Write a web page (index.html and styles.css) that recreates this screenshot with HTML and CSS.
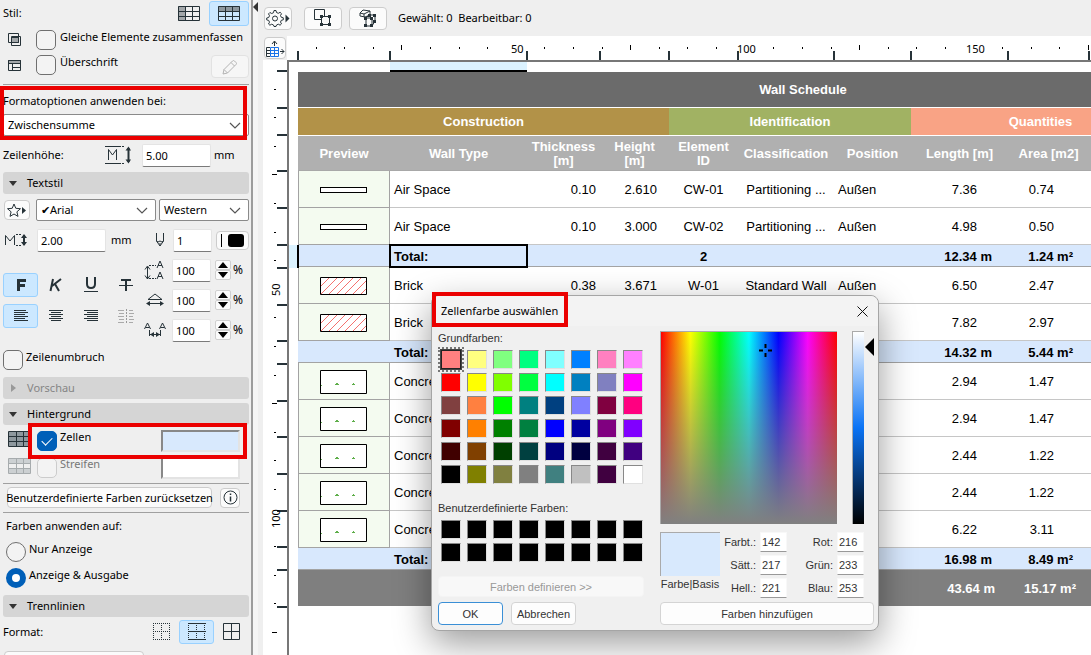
FILE: index.html
```
<!DOCTYPE html>
<html lang="de">
<head>
<meta charset="utf-8">
<title>Wall Schedule</title>
<link rel="stylesheet" href="styles.css">
</head>
<body>
<svg width="0" height="0" class="defs" aria-hidden="true">
  <symbol id="brick" viewBox="0 0 47 18"><path d="M.5 .5h46v17H.5z" fill="#fff"/><path d="M1 9L9 1M1 17L17 1M9 17L25 1M17 17L33 1M25 17L41 1M33 17L46 4M41 17L46 12" fill="none" stroke="#f4726e"/><path d="M.5 .5h46v17H.5z" fill="none" stroke="#000"/></symbol>
  <symbol id="conc" viewBox="0 0 47 24"><path d="M.5 .5h46v23H.5z" fill="#fff" stroke="#000"/><path d="M15 15v-1h1v-1h2v1h1v1zM32 15v-1h1v-1h1v1h1v1zM1 15h1v1H1z" fill="#5fae4a"/></symbol>
</svg>
<div class="app">
<aside class="panel">
  <div class="row row-style">
    <span class="grow">Stil:</span>
    <button class="tool" aria-label="Stil Spalten"><svg width="24" height="17" viewBox="0 0 24 17"><path d="M1 1h7v15H1z" fill="#a3a7aa"/><path d="M1.500 1.500h21v14h-21zM8.500 1v15M15.500 1v15M1 6.500h22M1 11.500h22" fill="none" stroke="#263238"/></svg></button>
    <button class="tool on" aria-label="Stil Zeilen"><svg width="24" height="17" viewBox="0 0 24 17"><path d="M1 1h22v5H1z" fill="#8d979e"/><path d="M1.500 1.500h21v14h-21zM8.500 1v15M15.500 1v15M1 6.500h22M1 11.500h22" fill="none" stroke="#263238"/></svg></button>
  </div>
  <div class="checks">
    <div class="row row-check">
      <svg class="lead" width="14" height="14" viewBox="0 0 14 14" fill="none" stroke="#263238"><path d="M3.500 4.500h7v5h-7z" fill="#a3a7aa"/><path d="M.5 .5h10v9H.5z"/><path d="M3.500 3.500h9v9h-9z"/></svg>
      <input type="checkbox" id="merge"><label for="merge">Gleiche Elemente zusammenfassen</label>
    </div>
    <div class="row row-check">
      <svg class="lead" width="14" height="14" viewBox="0 0 14 14" fill="none" stroke="#263238"><path d="M.5 2.500h12v3H.5z" fill="#a3a7aa"/><path d="M.5 2.500h12v10H.5zM4.500 5v7M4 9.500h8"/></svg>
      <input type="checkbox" id="head"><label for="head" class="grow">Überschrift</label>
      <button class="btn pencil" aria-label="Bearbeiten" disabled><svg width="16" height="16" viewBox="0 0 16 16" fill="none" stroke="#b3b3b3" stroke-linejoin="round"><path d="M1 15l1-4.500L10.500 2q1-1 2 0l1.500 1.500q1 1 0 2L5.500 14zM9 3.500L12.500 7M2 10.500L5.500 14"/></svg></button>
    </div>
  </div>
  <hr>
  <div class="apply">
    <label for="apply">Formatoptionen anwenden bei:</label>
    <span class="pick"><select id="apply"><option>Zwischensumme</option></select><svg width="12" height="7" viewBox="0 0 12 7"><path d="M1 1l5 5 5-5" fill="none" stroke="#555" stroke-width="1.200"/></svg></span>
    <span class="mark mark-apply"></span>
  </div>
  <div class="row row-height">
    <label for="rowh" class="grow">Zeilenhöhe:</label>
    <svg width="26" height="20" viewBox="0 0 26 20" fill="none" stroke="#263238"><path d="M3.500 15V4.500L7.500 10l4-5.500V15M0 1.500h14M0 18.500h14"/><path d="M14 1.500h6M14 18.500h6" stroke-dasharray="2 1"/><path d="M23.500 3v14" stroke-width="2"/><path d="M20.500 5.500l3-4 2.500 4zM20.500 14.500l3 4 2.500-4z" fill="#263238" stroke="none"/></svg>
    <input type="text" class="num wide" id="rowh" value="5.00"><span class="unit">mm</span>
  </div>
  <button class="section"><i class="tri down"></i>Textstil</button>
  <div class="row row-font">
    <button class="btn star" aria-label="Favoriten"><svg width="20" height="15" viewBox="0 0 20 15"><path d="M7 1l1.800 4.300 4.700.4-3.600 3.100 1.100 4.600L7 11l-4 2.400 1.100-4.600L.5 5.700l4.700-.4z" fill="none" stroke="#263238"/><path d="M15 4l4 3.500-4 3.500z" fill="#263238"/></svg></button>
    <span class="pick pick-font"><select aria-label="Schrift"><option>✔Arial</option></select><svg width="12" height="7" viewBox="0 0 12 7"><path d="M1 1l5 5 5-5" fill="none" stroke="#555" stroke-width="1.200"/></svg></span>
    <span class="pick pick-set"><select aria-label="Zeichensatz"><option>Western</option></select><svg width="12" height="7" viewBox="0 0 12 7"><path d="M1 1l5 5 5-5" fill="none" stroke="#555" stroke-width="1.200"/></svg></span>
  </div>
  <div class="row row-size">
    <svg class="size-icon" width="22" height="14" viewBox="0 0 22 14" fill="none" stroke="#263238"><path d="M.5 12V2.500L5 8l4.500-5.500V12"/><path d="M11 1.500h5M11 12.500h5" stroke-dasharray="2 1"/><path d="M19 2v10" stroke-width="2"/><path d="M16 5l3-4 3 4zM16 9l3 4 3-4z" fill="#263238" stroke="none"/></svg>
    <input type="text" class="num wide" aria-label="Schriftgröße" value="2.00"><span class="unit grow">mm</span>
    <svg class="pen-icon" width="10" height="14" viewBox="0 0 10 14" fill="none" stroke="#263238"><path d="M1.500 0v8L5 13l3.500-5V0M1.500 8l1.500 1 2-1 2 1 1.500-1M5 10v3"/></svg>
    <input type="text" class="num" aria-label="Stift" value="1">
    <button class="btn pencolor" aria-label="Stiftfarbe"><i class="hair"></i><i class="ink"></i></button>
  </div>
  <div class="format">
    <div class="styles">
      <button class="tool on" aria-label="Fett"><svg width="12" height="14" viewBox="0 0 12 14"><path d="M3.500 13V2.500H11M4 7.500h6" fill="none" stroke="#263238" stroke-width="3"/></svg></button>
      <button class="tool" aria-label="Kursiv"><svg width="13" height="14" viewBox="0 0 13 14"><path d="M4 1L1.500 13M12 1L3 8M6 6l4 7" fill="none" stroke="#263238" stroke-width="2"/></svg></button>
      <button class="tool" aria-label="Unterstrichen"><svg width="14" height="16" viewBox="0 0 14 16"><path d="M3 0v7q0 4 4 4t4-4V0" fill="none" stroke="#263238" stroke-width="2"/><path d="M0 14.500h14" stroke="#263238"/></svg></button>
      <button class="tool" aria-label="Durchgestrichen"><svg width="14" height="14" viewBox="0 0 14 14"><path d="M2 2h10M7 1v12" fill="none" stroke="#263238" stroke-width="2"/><path d="M0 7.500h14" stroke="#263238"/></svg></button>
      <button class="tool on" aria-label="Linksbündig"><svg width="14" height="12" viewBox="0 0 14 12"><path d="M0 .5h12M0 2.500h14M0 4.500h11M0 6.500h14M0 8.500h11M0 10.500h14" stroke="#263238"/></svg></button>
      <button class="tool" aria-label="Zentriert"><svg width="14" height="12" viewBox="0 0 14 12"><path d="M0 .5h14M2 2.500h10M0 4.500h14M2 6.500h10M0 8.500h14M2 10.500h10" stroke="#263238"/></svg></button>
      <button class="tool" aria-label="Rechtsbündig"><svg width="14" height="12" viewBox="0 0 14 12"><path d="M0 .5h14M3 2.500h11M0 4.500h14M3 6.500h11M0 8.500h14M3 10.500h11" stroke="#263238"/></svg></button>
      <button class="tool" aria-label="Blocksatz" disabled><svg width="16" height="14" viewBox="0 0 16 14"><path d="M0 1.500h6M1 4.500h5M0 7.500h6M1 10.500h5M0 13.500h6M11 1.500h4M11 4.500h5M11 7.500h4M11 10.500h5M11 13.500h4" stroke="#aaa"/><path d="M8.500 0v14" stroke="#999" stroke-dasharray="2 1"/></svg></button>
    </div>
    <div class="spins">
      <div class="row spin">
        <svg width="22" height="20" viewBox="0 0 22 20" fill="none" stroke="#263238"><path d="M3.500 7v12M1 9.500L3.500 6 6 9.500M1 15.500L3.500 19 6 15.500"/><path d="M5 5.500h7M5 18.500h7" stroke-dasharray="2 1"/><path d="M13 8l3-7 3 7M14 5.500h4M13 19l3-7 3 7M14 16.500h4"/></svg>
        <input type="text" class="num" aria-label="Zeilenabstand" value="100"><span class="updown"><button aria-label="mehr"><i class="up"></i></button><button aria-label="weniger"><i class="dn"></i></button></span>%
      </div>
      <div class="row spin">
        <svg width="22" height="14" viewBox="0 0 22 14" fill="none" stroke="#263238"><path d="M4 6.500L11 1l7 5.500zM4 10.500h14"/><path d="M2 10.500L6 8v5zM20 10.500L16 8v5z" fill="#263238" stroke="none"/></svg>
        <input type="text" class="num" aria-label="Breitenfaktor" value="100"><span class="updown"><button aria-label="mehr"><i class="up"></i></button><button aria-label="weniger"><i class="dn"></i></button></span>%
      </div>
      <div class="row spin">
        <svg width="22" height="16" viewBox="0 0 22 16" fill="none" stroke="#263238"><path d="M.5 7l3-6 3 6M1.500 5.500h4M15.500 7l3-6 3 6M16.500 5.500h4M5.500 8v6M16.500 8v6M6 12.500h10"/><path d="M6 12.500L10 10v5zM16 12.500L12 10v5z" fill="#263238" stroke="none"/></svg>
        <input type="text" class="num" aria-label="Zeichenabstand" value="100"><span class="updown"><button aria-label="mehr"><i class="up"></i></button><button aria-label="weniger"><i class="dn"></i></button></span>%
      </div>
    </div>
  </div>
  <div class="row row-check row-wrap"><input type="checkbox" id="wrap"><label for="wrap">Zeilenumbruch</label></div>
  <button class="section closed" disabled><i class="tri right"></i>Vorschau</button>
  <button class="section bgsec"><i class="tri down"></i>Hintergrund</button>
  <div class="bgrows">
    <div class="row row-check bgrow">
      <svg class="lead" width="23" height="17" viewBox="0 0 23 17"><path d="M1 1h21v15H1z" fill="#8e989e"/><path d="M.5 .5h22v15H.5zM8.500 0v16M15.500 0v16M0 5.500h23M0 10.500h23" fill="none" stroke="#263238"/></svg>
      <input type="checkbox" id="cells" checked><label for="cells" class="grow">Zellen</label><button class="well cell" aria-label="Zellenfarbe"></button>
    </div>
    <div class="row row-check bgrow off">
      <svg class="lead" width="23" height="17" viewBox="0 0 23 17"><path d="M1 1h21v5H1zM1 11h21v5H1z" fill="#ccd0d2"/><path d="M.5 .5h22v15H.5zM8.500 0v16M15.500 0v16M0 5.500h23M0 10.500h23" fill="none" stroke="#a6abad"/></svg>
      <input type="checkbox" id="stripes" disabled><label for="stripes" class="grow">Streifen</label><button class="well" aria-label="Streifenfarbe"></button>
    </div>
    <span class="mark mark-cells"></span>
  </div>
  <hr class="tight">
  <div class="row row-reset">
    <button class="btn reset">Benutzerdefinierte Farben zurücksetzen</button>
    <button class="btn info" aria-label="Info"><svg width="15" height="15" viewBox="0 0 15 15"><circle cx="7.500" cy="7.500" r="6.500" fill="none" stroke="#263238"/><path d="M7.500 6.500v5M7.500 3.500v1.500" stroke="#263238" stroke-width="1.500"/></svg></button>
  </div>
  <hr class="tight">
  <fieldset class="radios">
    <legend>Farben anwenden auf:</legend>
    <div class="row row-check"><input type="radio" name="out" id="screen"><label for="screen">Nur Anzeige</label></div>
    <div class="row row-check"><input type="radio" name="out" id="both" checked><label for="both">Anzeige &amp; Ausgabe</label></div>
  </fieldset>
  <button class="section"><i class="tri down"></i>Trennlinien</button>
  <div class="row row-lines">
    <span class="grow">Format:</span>
    <button class="tool" aria-label="Keine"><svg width="18" height="18" viewBox="0 0 18 18" fill="none" stroke="#263238" stroke-dasharray="1 1"><path d="M0 .5h18M0 8.500h18M0 16.500h18M.5 0v18M8.500 0v18M16.500 0v18"/></svg></button>
    <button class="tool on" aria-label="Horizontal"><svg width="18" height="18" viewBox="0 0 18 18" fill="none" stroke="#263238"><path d="M0 .5h18M0 8.500h18M0 16.500h18"/><path d="M.5 0v18M8.500 0v18M16.500 0v18" stroke-dasharray="1 1"/></svg></button>
    <button class="tool" aria-label="Alle"><svg width="18" height="18" viewBox="0 0 18 18" fill="none" stroke="#263238"><path d="M.5 .5h16v16H.5zM8.500 0v17M0 8.500h17"/></svg></button>
  </div>
  <button class="btn linetype">Solid Line</button>
</aside>
<div class="gutter"><i></i></div>
<main class="work">
  <div class="toolbar">
    <button class="btn gear" aria-label="Einstellungen"><svg width="24" height="18" viewBox="0 0 24 18"><path d="M8 1.500h2l.5 2 1.800.8 1.800-1 1.400 1.400-1 1.800.8 1.800 2 .5v2l-2 .5-.8 1.800 1 1.700-1.400 1.400-1.800-1-1.800.8-.5 1.500H8l-.5-1.500-1.800-.8-1.800 1L2.500 15l1-1.800-.8-1.800-2-.5V9l2-.5.8-1.800-1-1.800L3.900 3.500l1.800 1 1.800-.8z" fill="none" stroke="#263238"/><circle cx="9" cy="9.500" r="2.500" fill="none" stroke="#263238"/><path d="M19.500 5.500l4 4-4 4z" fill="#263238"/></svg></button>
    <button class="btn act" aria-label="Auswahl 2D"><svg width="18" height="18" viewBox="0 0 18 18"><path d="M.5 .5h10v10H.5z" fill="none" stroke="#263238"/><path d="M7.500 7.500h8v8h-8z" fill="#f8f8f8" stroke="#263238"/><path d="M6 6h3v3H6zM14 6h3v3h-3zM6 14h3v3H6zM14 14h3v3h-3z" fill="#263238"/></svg></button>
    <button class="btn act act3" aria-label="Auswahl 3D"><svg width="18" height="19" viewBox="0 0 18 19"><path d="M1 4l3-3 7 1v4L6 8 1 7zM1 4l4 1 6-3M5 5v3M7 9l3-3h6v6l-3 5H7zM7 9h6v8M13 9l3-3" fill="none" stroke="#263238"/><path d="M5 8h3v3H5zM9 5h3v3H9zM14 5h3v3h-3zM11 8h3v3h-3zM5 15h3v3H5zM11 15h3v3h-3zM14 11h3v3h-3z" fill="#263238"/></svg></button>
    <span>Gewählt: 0&nbsp; Bearbeitbar: 0</span>
  </div>
  <div class="sheet">
    <div class="corner"><button class="btn cornerbtn" aria-label="Tabelle"><svg width="19" height="17" viewBox="0 0 19 17" fill="none"><path d="M4.500 7.500h8v9h-8zM8.500 7v10M4 10.500h9M4 13.500h9" stroke="#1a73e8"/><path d="M4 7.500H.5v9H4M0 10.500h4M0 13.500h4M8.500 6V1.500M6 4l2.500-3L11 4M14 11.500h4M15.500 9l2.500 2.500L15.500 14" stroke="#263238"/></svg></button></div>
    <div class="hruler"><svg width="1030" height="24">
      <path d="M11 15v9M103 15v9M240 15v9M313 15v9M382 15v9M451 15v9M547 15v9M624 15v9M721 15v9M802 15v9" stroke="#263238" stroke-width="2"/>
      <path d="M29.500 11v2M57.500 11v2M86.500 11v2M114.500 9v5M143.500 11v2M172.500 11v2M200.500 11v2M257.500 11v2M286.500 11v2M315.500 11v2M343.500 9v5M372.500 11v2M400.500 11v2M429.500 11v2M486.500 11v2M515.500 11v2M544.500 11v2M572.500 9v5M601.500 11v2M629.500 11v2M658.500 11v2M715.500 11v2M744.500 11v2M772.500 11v2M801.500 9v5" stroke="#000"/>
      <text x="224" y="17">50</text><text x="450" y="17">100</text><text x="679" y="17">150</text></svg></div>
    <div class="vruler"><svg width="24" height="593">
      <path d="M14 11h10M14 48h10M14 75h10M14 111h10M14 148h10M14 185h10M14 208h10M14 245h10M14 281h10M14 304h10M14 341h10M14 377h10M14 414h10M14 451h10M14 487h10M14 510h10M14 547h10" stroke="#263238" stroke-width="2"/>
      <path d="M11 29.500h2M11 57.500h2M11 86.500h2M9 114.500h5M11 143.500h2M11 172.500h2M11 200.500h2M11 257.500h2M11 286.500h2M11 315.500h2M9 343.500h5M11 372.500h2M11 400.500h2M11 429.500h2M11 486.500h2M11 515.500h2M11 543.500h2M9 572.500h5" stroke="#000"/>
      <text transform="translate(17 236) rotate(-90)">50</text><text transform="translate(17 468) rotate(-90)">100</text></svg></div>
    <div class="canvas">
      <i class="colmark"></i><i class="rowmark"></i>
      <table>
        <colgroup><col class="c-prev"><col class="c-type"><col class="c-num"><col class="c-mid"><col class="c-mid"><col class="c-cls"><col class="c-pos"><col class="c-len"><col class="c-area"><col class="c-area"><col class="c-rest"></colgroup>
        <thead>
          <tr class="title"><th colspan="11">Wall Schedule</th></tr>
          <tr class="groups"><th colspan="4" class="g1">Construction</th><th colspan="3" class="g2">Identification</th><th colspan="3" class="g3">Quantities</th><th class="g3"></th></tr>
          <tr class="heads"><th>Preview</th><th>Wall Type</th><th>Thickness<br>[m]</th><th>Height<br>[m]</th><th>Element<br>ID</th><th>Classification</th><th>Position</th><th>Length [m]</th><th>Area [m2]</th><th></th><th></th></tr>
        </thead>
        <tbody>
          <tr><td class="prev"><i class="air"></i></td><td>Air Space</td><td class="n">0.10</td><td class="h">2.610</td><td class="c">CW-01</td><td class="c">Partitioning ...</td><td>Außen</td><td class="len">7.36</td><td class="area">0.74</td><td></td><td></td></tr>
          <tr><td class="prev"><i class="air"></i></td><td>Air Space</td><td class="n">0.10</td><td class="h">3.000</td><td class="c">CW-02</td><td class="c">Partitioning ...</td><td>Außen</td><td class="len">4.98</td><td class="area">0.50</td><td></td><td></td></tr>
          <tr class="total"><td></td><td class="sel">Total:</td><td></td><td></td><td class="c">2</td><td></td><td></td><td class="len">12.34 m</td><td class="area">1.24 m²</td><td></td><td></td></tr>
          <tr><td class="prev"><svg width="47" height="18"><use href="#brick"/></svg></td><td>Brick</td><td class="n">0.38</td><td class="h">3.671</td><td class="c">W-01</td><td class="c">Standard Wall</td><td>Außen</td><td class="len">6.50</td><td class="area">2.47</td><td></td><td></td></tr>
          <tr><td class="prev"><svg width="47" height="18"><use href="#brick"/></svg></td><td>Brick</td><td></td><td></td><td></td><td></td><td></td><td class="len">7.82</td><td class="area">2.97</td><td></td><td></td></tr>
          <tr class="total"><td></td><td>Total:</td><td></td><td></td><td></td><td></td><td></td><td class="len">14.32 m</td><td class="area">5.44 m²</td><td></td><td></td></tr>
          <tr><td class="prev"><svg width="47" height="24"><use href="#conc"/></svg></td><td>Concrete</td><td></td><td></td><td></td><td></td><td></td><td class="len">2.94</td><td class="area">1.47</td><td></td><td></td></tr>
          <tr><td class="prev"><svg width="47" height="24"><use href="#conc"/></svg></td><td>Concrete</td><td></td><td></td><td></td><td></td><td></td><td class="len">2.94</td><td class="area">1.47</td><td></td><td></td></tr>
          <tr><td class="prev"><svg width="47" height="24"><use href="#conc"/></svg></td><td>Concrete</td><td></td><td></td><td></td><td></td><td></td><td class="len">2.44</td><td class="area">1.22</td><td></td><td></td></tr>
          <tr><td class="prev"><svg width="47" height="24"><use href="#conc"/></svg></td><td>Concrete</td><td></td><td></td><td></td><td></td><td></td><td class="len">2.44</td><td class="area">1.22</td><td></td><td></td></tr>
          <tr><td class="prev"><svg width="47" height="24"><use href="#conc"/></svg></td><td>Concrete</td><td></td><td></td><td></td><td></td><td></td><td class="len">6.22</td><td class="area">3.11</td><td></td><td></td></tr>
          <tr class="total"><td></td><td>Total:</td><td></td><td></td><td></td><td></td><td></td><td class="len">16.98 m</td><td class="area">8.49 m²</td><td></td><td></td></tr>
          <tr class="grand"><td></td><td></td><td></td><td></td><td></td><td></td><td></td><td class="len">43.64 m</td><td class="area">15.17 m²</td><td></td><td></td></tr>
        </tbody>
      </table>
    </div>
  </div>
</main>
</div>

<div class="dialog" role="dialog" aria-labelledby="dlg">
  <header><h1 id="dlg">Zellenfarbe auswählen</h1><button class="close" aria-label="Schließen"><svg width="11" height="11" viewBox="0 0 11 11"><path d="M.5 .5l10 10M10.500 .5l-10 10" stroke="#111" fill="none"/></svg></button></header>
  <div class="dlg-body">
    <section class="basic">
      <p>Grundfarben:</p>
      <div class="swatches">
        <button class="cur" style="background:#ff8080"></button><button style="background:#ffff80"></button><button style="background:#80ff80"></button><button style="background:#00ff80"></button><button style="background:#80ffff"></button><button style="background:#0080ff"></button><button style="background:#ff80c0"></button><button style="background:#ff80ff"></button>
        <button style="background:#ff0000"></button><button style="background:#ffff00"></button><button style="background:#80ff00"></button><button style="background:#00ff40"></button><button style="background:#00ffff"></button><button style="background:#0080c0"></button><button style="background:#8080c0"></button><button style="background:#ff00ff"></button>
        <button style="background:#804040"></button><button style="background:#ff8040"></button><button style="background:#00ff00"></button><button style="background:#008080"></button><button style="background:#004080"></button><button style="background:#8080ff"></button><button style="background:#800040"></button><button style="background:#ff0080"></button>
        <button style="background:#800000"></button><button style="background:#ff8000"></button><button style="background:#008000"></button><button style="background:#008040"></button><button style="background:#0000ff"></button><button style="background:#0000a0"></button><button style="background:#800080"></button><button style="background:#8000ff"></button>
        <button style="background:#400000"></button><button style="background:#804000"></button><button style="background:#004000"></button><button style="background:#004040"></button><button style="background:#000080"></button><button style="background:#000040"></button><button style="background:#400040"></button><button style="background:#400080"></button>
        <button style="background:#000000"></button><button style="background:#808000"></button><button style="background:#808040"></button><button style="background:#808080"></button><button style="background:#408080"></button><button style="background:#c0c0c0"></button><button style="background:#400040"></button><button style="background:#ffffff"></button>
      </div>
      <p class="custom">Benutzerdefinierte Farben:</p>
      <div class="swatches black">
        <button></button><button></button><button></button><button></button><button></button><button></button><button></button><button></button>
        <button></button><button></button><button></button><button></button><button></button><button></button><button></button><button></button>
      </div>
      <button class="push define" disabled>Farben definieren &gt;&gt;</button>
      <div class="answers"><button class="push ok">OK</button><button class="push">Abbrechen</button></div>
    </section>
    <section class="mixer">
      <div class="fields">
        <div class="spectrum"><svg width="13" height="13" viewBox="0 0 13 13"><path d="M6.500 0v4M6.500 9v4M0 6.500h4M9 6.500h4" stroke="#000" stroke-width="2"/></svg></div>
        <div class="lum"></div><i class="pointer"></i>
      </div>
      <div class="values">
        <div class="sample"><div class="chip"></div>Farbe|Basis</div>
        <div class="nums">
          <label for="f1">Farbt.:</label><input type="text" id="f1" value="142"><label for="f4">Rot:</label><input type="text" id="f4" value="216">
          <label for="f2">Sätt.:</label><input type="text" id="f2" value="217"><label for="f5">Grün:</label><input type="text" id="f5" value="233">
          <label for="f3">Hell.:</label><input type="text" id="f3" value="221"><label for="f6">Blau:</label><input type="text" id="f6" value="253">
        </div>
      </div>
      <button class="push add">Farben hinzufügen</button>
    </section>
  </div>
  <span class="mark mark-title"></span>
</div>
</body>
</html>
```
FILE: styles.css
```
* { box-sizing: border-box; }
body {
  margin: 0;
  overflow: hidden;
  font: 12px/16px "Noto Sans", "Open Sans", sans-serif;
  color: #000;
}
button, input, select { font: inherit; color: inherit; margin: 0; padding: 0; }
button { border: 0; background: none; }
svg { display: block; flex: none; }
.defs { position: absolute; }
i { display: block; }
.grow { flex: 1; }
.app { display: flex; height: 100vh; overflow: hidden; background: #efefef; }
.row { display: flex; align-items: center; }

/* Settings panel */
.panel {
  flex: none;
  width: 253px;
  padding: 0 2px 0 3px;
  border-right: 2px solid #9c9c9c;
  overflow: hidden;
  font-size: 11px;
}
.panel hr { margin: 9px 0 8px; border: 0; border-top: 1px solid #a0a0a0; }
.panel hr.tight { margin: 4px 0 3px; }
.tool {
  display: flex;
  align-items: center;
  justify-content: center;
  width: 36px;
  height: 24px;
  border: 1px solid transparent;
  border-radius: 3px;
}
.tool.on { background: #cce8ff; border-color: #99d1ff; }
.row-style { height: 26px; margin-bottom: 4px; }
.row-style .tool { width: 40px; height: 25px; }
.btn {
  display: flex;
  align-items: center;
  justify-content: center;
  background: #fbfbfb;
  border: 1px solid #ccc;
  border-radius: 4px;
}
.checks { display: flex; flex-direction: column; gap: 5px; }
.row-check { align-items: flex-start; height: 20px; }
svg.lead { overflow: visible; }
.checks .lead { margin: 3px 14px 0 5px; }
.bgrow .lead { margin: 1px 6px 0 5px; }
input[type="checkbox"], input[type="radio"] {
  appearance: none;
  flex: none;
  display: flex;
  align-items: center;
  justify-content: center;
  width: 20px;
  height: 20px;
  border: 1px solid #6f6f6f;
  border-radius: 5px;
  background: #f3f3f3;
}
input[type="radio"] { border-radius: 50%; }
input[type="checkbox"]:checked { background: #005fb8; border-color: #005fb8; }
input[type="checkbox"]:checked::after {
  content: "";
  width: 9px;
  height: 5px;
  margin-bottom: 3px;
  border: solid #fff;
  border-width: 0 0 1px 1px;
  transform: rotate(-45deg);
}
input[type="radio"]:checked { background: #fff; border: 6px solid #005fb8; }
.row-check label { padding-left: 4px; line-height: 14px; }
.pencil { width: 38px; height: 23px; background: #f6f6f6; border-color: #e2e2e2; }

.pick { position: relative; display: flex; height: 22px; }
.pick select {
  appearance: none;
  width: 100%;
  padding: 0 4px;
  border: 1px solid #8a8a8a;
  border-radius: 2px;
  background: #fff;
}
.pick svg { position: absolute; right: 8px; top: 8px; pointer-events: none; }
.apply { position: relative; }
.apply label { display: block; margin-bottom: 5px; }
.mark { position: absolute; border: 4px solid #eb0000; pointer-events: none; }
.mark-apply { left: -3px; top: -7px; width: 247px; height: 54px; }

.num {
  width: 39px;
  height: 23px;
  padding-left: 3px;
  border: 1px solid #e4e4e4;
  border-bottom-color: #7a7a7a;
  border-radius: 2px;
  background: #fff;
}
.num.wide { width: 69px; }
.unit { padding-left: 5px; }
.row-height { height: 22px; margin: 8px 0 6px; }
.row-height .num { margin-left: 11px; }
.row-height .unit { width: 38px; padding-left: 3px; }

.section {
  display: flex;
  align-items: center;
  width: 100%;
  height: 22px;
  border-radius: 3px;
  background: #d5d5d5;
}
.section:disabled { color: #858585; }
.tri { width: 24px; }
.tri::before {
  content: "";
  display: block;
  width: 0;
  margin-left: 6px;
  border: 4px solid transparent;
}
.tri.down::before { border-top: 5px solid #333; border-bottom: 0; }
.tri.right::before { border-left: 5px solid #999; border-right: 0; margin-left: 8px; }

.row-font { height: 22px; margin: 5px 0 8px; gap: 3px; }
.star { width: 26px; height: 20px; margin-left: 1px; }
.pick-font { flex: 1; margin-left: 3px; }
.pick-set { width: 90px; }
.row-size { height: 22px; }
.size-icon { margin: 0 10px 0 2px; }
.pen-icon { margin-right: 8px; }
.pencolor { width: 33px; height: 19px; margin-left: 4px; gap: 6px; }
.hair { width: 1px; height: 13px; background: #000; }
.ink { width: 16px; height: 13px; border-radius: 3px; background: #000; }
.format { display: flex; margin-top: 8px; }
.styles {
  display: grid;
  grid-template-columns: repeat(4, 35px);
  align-content: center;
  row-gap: 7px;
  flex: 1;
}
.styles .tool { width: 35px; }
.spins { display: flex; flex-direction: column; gap: 8px; width: 105px; }
.spin { height: 22px; font-size: 12px; }
.spin .num { margin-left: 6px; font-size: 11px; }
.updown { width: 16px; margin: 0 2px 0 4px; }
.updown button {
  display: flex;
  align-items: center;
  justify-content: center;
  width: 16px;
  height: 10px;
  background: #fbfbfb;
  border: 1px solid #d0d0d0;
  border-radius: 2px;
}
.up, .dn { border: 5px solid transparent; }
.up { border-top: 0; border-bottom: 6px solid #000; }
.dn { border-bottom: 0; border-top: 6px solid #000; }
.row-wrap { margin: 9px 0 7px; }
.row-wrap label { padding-left: 3px; }
.bgsec { margin-top: 4px; }
.bgrows { position: relative; display: flex; flex-direction: column; gap: 5px; margin-top: 5px; }
.bgrow { height: 22px; padding-right: 9px; }
.bgrow input { margin-top: 1px; }
.bgrow label { padding-left: 3px; }
.off { color: #777; }
.off input { border-color: #ccc; }
.well {
  width: 79px;
  height: 22px;
  background: #fff;
  border: 2px solid;
  border-color: #888 #e3e3e3 #e3e3e3 #888;
}
.well.cell { background: #d8e9fd; }
.mark-cells { left: 25px; top: -7px; width: 219px; height: 36px; }
.row-reset { height: 21px; padding-left: 4px; gap: 8px; }
.reset { width: 205px; height: 21px; white-space: nowrap; }
.info { width: 20px; height: 20px; }
.radios { display: flex; flex-direction: column; gap: 6px; margin: 5px 0 7px 3px; padding: 0; border: 0; }
.radios legend { padding: 0; margin-bottom: 8px; }
.radios label { padding-left: 3px; }
.row-lines { height: 24px; margin: 3px 0 7px; }
.row-lines .tool { width: 35px; }
.linetype { width: 140px; height: 22px; margin-left: 1px; padding-left: 4px; justify-content: flex-start; align-items: flex-start; line-height: 14px; }

.gutter { flex: none; width: 5px; background: #f5f5f5; }
.gutter i { width: 0; margin-top: 2px; border: 5px solid transparent; border-left: 0; border-right-color: #333; }

/* Schedule area */
.work { flex: 1; min-width: 0; padding-left: 5px; display: flex; flex-direction: column; }
.toolbar { display: flex; align-items: center; height: 36px; padding-left: 1px; font-size: 11px; }
.gear { width: 28px; height: 23px; margin-right: 12px; }
.act { width: 38px; height: 23px; margin-right: 7px; }
.act3 { margin-right: 11px; }
.sheet {
  flex: 1;
  display: grid;
  grid-template: 24px minmax(0, 1fr) / 24px minmax(0, 1fr);
  background: #fff;
}
.corner { background: #efefef; padding: 1px; }
.cornerbtn { width: 22px; height: 22px; }
.hruler, .vruler { overflow: hidden; }
.sheet text { font-size: 11px; }
.canvas {
  position: relative;
  overflow: hidden;
  padding: 10px 0 0 9px;
  border: solid #777;
  border-width: 2px 0 0 2px;
}
.colmark { position: absolute; left: 101px; top: 0; width: 137px; height: 10px; background: #dbf2ff; border-bottom: 2px solid #000; }
.rowmark { position: absolute; left: 0; top: 183px; width: 10px; height: 23px; background: #dbf2ff; border-right: 2px solid #000; z-index: 1; }
table {
  table-layout: fixed;
  width: 1010px;
  border-spacing: 0;
  font: 13px/14px "Liberation Sans", Arial, sans-serif;
  color: #000;
}
.c-prev { width: 92px; }
.c-type { width: 137px; }
.c-num { width: 73px; }
.c-mid { width: 69px; }
.c-cls { width: 96px; }
.c-pos { width: 77px; }
.c-len { width: 97px; }
.c-area { width: 81px; }
th { padding: 0; color: #fff; border-bottom: 1px solid #fff; }
.title th { height: 36px; background: #6b6b6b; }
.groups th { height: 28px; }
.groups .g1 { background: #b29248; }
.groups .g2 { background: #a1b263; }
.groups .g3 { background: #f9a385; }
.heads th { height: 35px; padding-top: 2px; background: #b0b0b0; border-color: #a8a8a8; }
td { height: 37px; padding: 2px 4px 0; border-bottom: 1px solid #c6c6c6; white-space: nowrap; }
.prev { background: #f4fbf0; border: solid #a3a3a3; border-width: 0 1px 1px; }
.prev i, .prev svg { width: 47px; margin-left: 17px; }
.prev .air { height: 6px; border: 1px solid #000; background: #fff; }
.n { text-align: right; }
.h { text-align: right; padding-right: 12px; }
.c { text-align: center; }
.len { text-align: right; padding-right: 31px; }
.area { text-align: right; padding-right: 35px; }
.total td { height: 22px; background: #d8e8fd; font-weight: bold; border-color: #a3a3a3; }
.total .len, .total .area { padding-right: 16px; }
.total .sel { outline: 2px solid #000; outline-offset: -1px; }
.grand td { height: 36px; background: #7f7f7f; color: #fff; font-weight: bold; border: 0; }
.grand .len, .grand .area { padding-right: 13px; }

/* Colour dialog */
.dialog {
  position: absolute;
  left: 431px;
  top: 295px;
  width: 448px;
  border: 1px solid #a5a5a5;
  border-radius: 8px;
  background: #f0f0f0;
  box-shadow: 0 12px 36px rgba(0, 0, 0, 0.4);
  font: 11px/14px "Liberation Sans", Arial, sans-serif;
  color: #333;
}
.dialog header {
  display: flex;
  align-items: center;
  height: 30px;
  padding: 0 10px 0 9px;
  border-radius: 8px 8px 0 0;
  background: #f3f3f3;
}
.dialog h1 { flex: 1; margin: 0; font: 11px/16px "Noto Sans", "Open Sans", sans-serif; color: #000; }
.close { display: flex; }
.mark-title { left: 0; top: -4px; width: 136px; height: 35px; }
.dlg-body { display: flex; gap: 16px; padding: 5px 4px 5px 6px; }
.basic { width: 206px; display: flex; flex-direction: column; }
.basic p { margin: 0 0 5px; }
.swatches { display: grid; grid-template-columns: repeat(8, 20px); gap: 4px 6px; padding-left: 3px; }
.swatches button { height: 19px; border: 1px solid; border-color: #888 #e0e0e0 #e0e0e0 #888; }
.swatches .cur { outline: 2px dotted #777; border-color: #222; outline-offset: 1px; box-shadow: 0 0 0 1px #444; }
.basic .custom { margin: 17px 0 5px; }
.black button { background: #000; }
.push {
  height: 23px;
  min-width: 65px;
  border: 1px solid #d4d4d4;
  border-radius: 4px;
  background: #fdfdfd;
}
.push:disabled { background: #f8f8f8; border-color: #f4f4f4; color: #999; }
.define { height: 21px; margin: 14px 0 5px; }
.answers { display: flex; gap: 8px; }
.ok { border: 1px solid #3a8fd6; }
.mixer { flex: 1; display: flex; flex-direction: column; }
.fields { display: flex; align-items: flex-start; }
.spectrum {
  position: relative;
  width: 177px;
  height: 193px;
  border: solid #aaa;
  border-width: 1px 0 0 1px;
  background:
    linear-gradient(transparent, #808080),
    linear-gradient(90deg, #f00, #ff0, #0f0, #0ff, #00f, #f0f, #f00);
}
.spectrum svg { position: absolute; left: 98px; top: 12px; }
.lum {
  width: 12px;
  height: 193px;
  margin-left: 15px;
  border-top: 1px solid #aaa;
  border-left: 1px solid #aaa;
  background: linear-gradient(#fff, #0a73f5 50%, #000);
}
.pointer { margin: 7px 0 0 1px; border: 9px solid transparent; border-left: 0; border-right-color: #000; }
.values { display: flex; gap: 4px; margin: 8px 0 4px; }
.sample { width: 60px; text-align: center; white-space: nowrap; }
.chip { height: 44px; margin-bottom: 1px; background: #d8e9fd; border: solid #aaa; border-width: 1px 0 0 1px; }
.nums { display: grid; grid-template-columns: 32px 27px 42px 27px; align-items: center; column-gap: 4px; row-gap: 3px; text-align: right; }
.nums input { width: 27px; height: 20px; padding: 0 1px; border: 1px solid #f8f8f8; border-bottom-color: #999; background: #fff; }
.add { margin-top: auto; }
```
